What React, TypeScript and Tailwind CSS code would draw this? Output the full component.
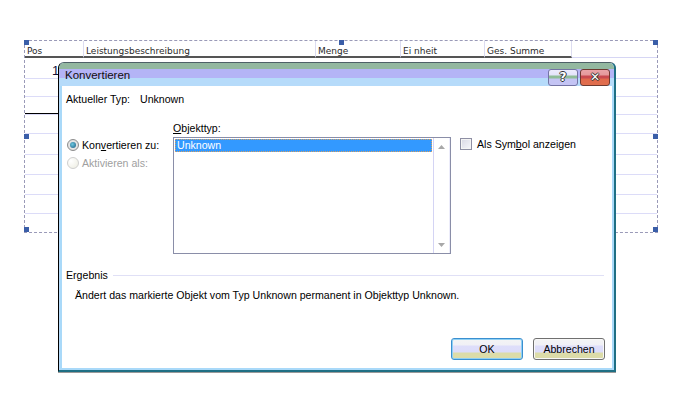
import React from "react";

const font = { fontFamily: '"Liberation Sans", Arial, sans-serif' };

function Handle({ x, y }: { x: number; y: number }) {
  return (
    <div
      className="absolute w-[5px] h-[5px] bg-[#3a5ea8]"
      style={{ left: x, top: y }}
    />
  );
}

function HeaderCell({ w, label, last }: { w?: number; label: string; last?: boolean }) {
  return (
    <div
      className={
        "h-full flex items-end pb-0 pl-[2px] text-[9px] leading-[9px] text-[#2a2a2a] " +
        (last
          ? "flex-1 border-b border-[#d6d6f4]"
          : "border-r border-r-[#dcdcf0] border-b-[2px] border-b-[#555]")
      }
      style={{ width: w, fontFamily: '"DejaVu Sans", Verdana, sans-serif' }}
    >
      {label}
    </div>
  );
}

function Row({ h, children, blackPos }: { h: number; children?: React.ReactNode; blackPos?: boolean }) {
  return (
    <div className="flex border-b border-[#dcdcf8]" style={{ height: h }}>
      <div
        className={"w-[59px] h-full relative " + (blackPos ? "border-b border-black" : "")}
      >
        {children}
      </div>
      <div className="flex-1" />
    </div>
  );
}

function Button({ label, focused }: { label: string; focused?: boolean }) {
  return (
    <div
      className={
        "w-[72px] h-[22px] rounded-[3px] flex items-center justify-center text-[10.6px] text-black " +
        (focused
          ? "border border-[#3a8fd0] shadow-[inset_0_0_0_1px_#8fd0f4]"
          : "border border-[#707070] shadow-[inset_0_0_0_1px_#f8f8f8]")
      }
      style={{
        ...font,
        background:
          "linear-gradient(to bottom,#f4f4f4 0px,#f0f0f6 6px,#dedefa 7px,#dcdcfa 13px,#dcdca8 14px,#dcdcaa 22px)",
      }}
    >
      {label}
    </div>
  );
}

export default function App() {
  const rows = [21, 18, 18, 19, 21, 20, 20, 19];
  return (
    <div className="relative w-[696px] h-[393px] overflow-hidden bg-white">
      {/* table */}
      <div className="pt-[40px] pl-[24px]">
        <div className="w-[634px] h-[193px] border border-dashed border-[#9a9ab8] flex flex-col">
          <div className="h-[17px] flex">
            <HeaderCell w={59} label="Pos" />
            <HeaderCell w={232} label="Leistungsbeschreibung" />
            <HeaderCell w={85} label="Menge" />
            <HeaderCell w={84} label="Ei nheit" />
            <HeaderCell w={87} label="Ges. Summe" />
            <HeaderCell label="" last />
          </div>
          {rows.map((h, i) => (
            <Row key={i} h={h} blackPos={i === 2}>
              {i === 0 && (
                <span
                  className="absolute left-[27px] top-[3px] text-[13px] text-[#10103a]"
                  style={font}
                >
                  1
                </span>
              )}
            </Row>
          ))}
        </div>
      </div>
      <Handle x={24} y={40} />
      <Handle x={339} y={40} />
      <Handle x={653} y={40} />
      <Handle x={24} y={134} />
      <Handle x={653} y={134} />
      <Handle x={24} y={227} />
      <Handle x={653} y={227} />

      {/* dialog */}
      <div
        className="absolute left-[58px] top-[62px] w-[558px] h-[310px] flex flex-col rounded-t-[6px] border-t border-t-[#4e6068] border-l border-l-black border-r-[2px] border-r-[#1f6f84] border-b-[2px] border-b-[#1f6f84] shadow-[0_1px_0_#9a9a9a] bg-[#b6dbfa]"
        style={font}
      >
        {/* title bar */}
        <div
          className="h-[23px] flex items-center rounded-t-[5px] relative"
          style={{
            background:
              "linear-gradient(to bottom,#93b8a0 0px,#93b8a0 6px,#b4b4f6 6px,#b4b4f6 15px,#b6dbfa 15px,#b6dbfa 23px)",
          }}
        >
          <span className="ml-[6px] mt-[2px] text-[11.5px] text-[#101010]">Konvertieren</span>
          <div className="ml-auto mr-[4px] mt-[5px] flex gap-[2px]">
            <div
              className="w-[30px] h-[17px] rounded-[3px] border border-[#7474a4] flex items-center justify-center"
              style={{
                background:
                  "linear-gradient(to bottom,#ececfc 0px,#e4e4fa 5px,#8fbc98 6px,#8fbc98 8px,#c4c4f4 9px,#c4c4f4 17px)",
              }}
            >
              <span
                className="text-[12px] font-bold text-white leading-none"
                style={{
                  fontFamily: '"DejaVu Sans", sans-serif',
                  textShadow:
                    "1px 0 0 #333,-1px 0 0 #333,0 1px 0 #333,0 -1px 0 #333",
                }}
              >
                ?
              </span>
            </div>
            <div
              className="w-[30px] h-[17px] rounded-[3px] border border-[#6e3a30] flex items-center justify-center"
              style={{
                background:
                  "linear-gradient(to bottom,#eaa4a8 0px,#e49a9c 5px,#c84a50 6px,#c84a50 8px,#e06a4c 9px,#e0704e 17px)",
              }}
            >
              <span
                className="text-[12px] font-bold text-white leading-none"
                style={{
                  fontFamily: '"DejaVu Sans", sans-serif',
                  textShadow:
                    "1px 0 0 #333,-1px 0 0 #333,0 1px 0 #333,0 -1px 0 #333",
                }}
              >
                ✕
              </span>
            </div>
          </div>
        </div>

        {/* client */}
        <div className="flex-1 ml-[1px] border-l-[2px] border-r-[2px] border-b-[2px] border-[#a9d9f9] bg-white flex flex-col pl-[4px] pr-[7px] text-[10.6px] text-black leading-[14px]">
          <div className="mt-[6px] h-[14px] flex">
            <span>Aktueller Typ:</span>
            <span className="ml-[10px]">Unknown</span>
          </div>

          <div className="mt-[15px] flex items-start">
            {/* radios */}
            <div className="w-[107px] pt-[18px] pl-[1px] flex flex-col">
              <div className="h-[18px] flex items-start">
                <div className="w-[12px] h-[12px] rounded-full border border-[#8c8c8c] bg-[radial-gradient(circle,#f4f4f4,#d8d8d8)] flex items-center justify-center">
                  <div className="w-[6px] h-[6px] rounded-full bg-[radial-gradient(circle_at_40%_40%,#6cc8e0,#1d5a80)]" />
                </div>
                <span className="ml-[3px] -mt-[1px]">
                  Kon<span className="underline">v</span>ertieren zu:
                </span>
              </div>
              <div className="h-[18px] flex items-start">
                <div className="w-[12px] h-[12px] rounded-full border border-[#cfcfcf] bg-[radial-gradient(circle_at_30%_30%,#ffffff,#ecece0)]" />
                <span className="ml-[3px] -mt-[1px] text-[#a0a0a0]">Aktivieren als:</span>
              </div>
            </div>

            {/* list */}
            <div className="w-[278px] flex flex-col">
              <div className="h-[16px]">
                <span className="underline">O</span>bjekttyp:
              </div>
              <div className="h-[117px] border border-[#8a8ea8] flex">
                <div className="flex-1 p-[1px]">
                  <div className="h-[13px] bg-[#3399ff] border border-dotted border-[#d8a060] flex items-center pl-[1px] text-white leading-none">
                    Unknown
                  </div>
                </div>
                <div className="w-[17px] border-l border-[#d4d4f4] border-r border-r-[#ececfa] flex flex-col items-center justify-between pt-[7px] pb-[6px]">
                  <svg width="7" height="4" viewBox="0 0 7 4">
                    <path d="M0 4 L3.5 0 L7 4 Z" fill="#a8a8a8" />
                  </svg>
                  <svg width="7" height="4" viewBox="0 0 7 4">
                    <path d="M0 0 L3.5 4 L7 0 Z" fill="#a8a8a8" />
                  </svg>
                </div>
              </div>
            </div>

            {/* checkbox */}
            <div className="ml-[9px] pt-[17px] flex items-start">
              <div className="w-[12px] h-[12px] border border-[#8e8fa4] bg-[linear-gradient(135deg,#d8d8e4,#f6f6fa)] shadow-[inset_0_0_0_1px_#f4f4f4]" />
              <span className="ml-[5px] -mt-[1px]">
                Als Sym<span className="underline">b</span>ol anzeigen
              </span>
            </div>
          </div>

          <div className="mt-[14px] h-[14px] flex items-center">
            <span>Ergebnis</span>
            <div className="ml-[5px] flex-1 mr-[1px] h-px bg-[#e0e0f6]" />
          </div>

          <div className="mt-[6px] pl-[9px] h-[14px]">
            Ändert das markierte Objekt vom Typ Unknown permanent in Objekttyp Unknown.
          </div>

          <div className="mt-[36px] flex justify-end gap-[10px]">
            <Button label="OK" focused />
            <Button label="Abbrechen" />
          </div>
        </div>
      </div>
    </div>
  );
}
